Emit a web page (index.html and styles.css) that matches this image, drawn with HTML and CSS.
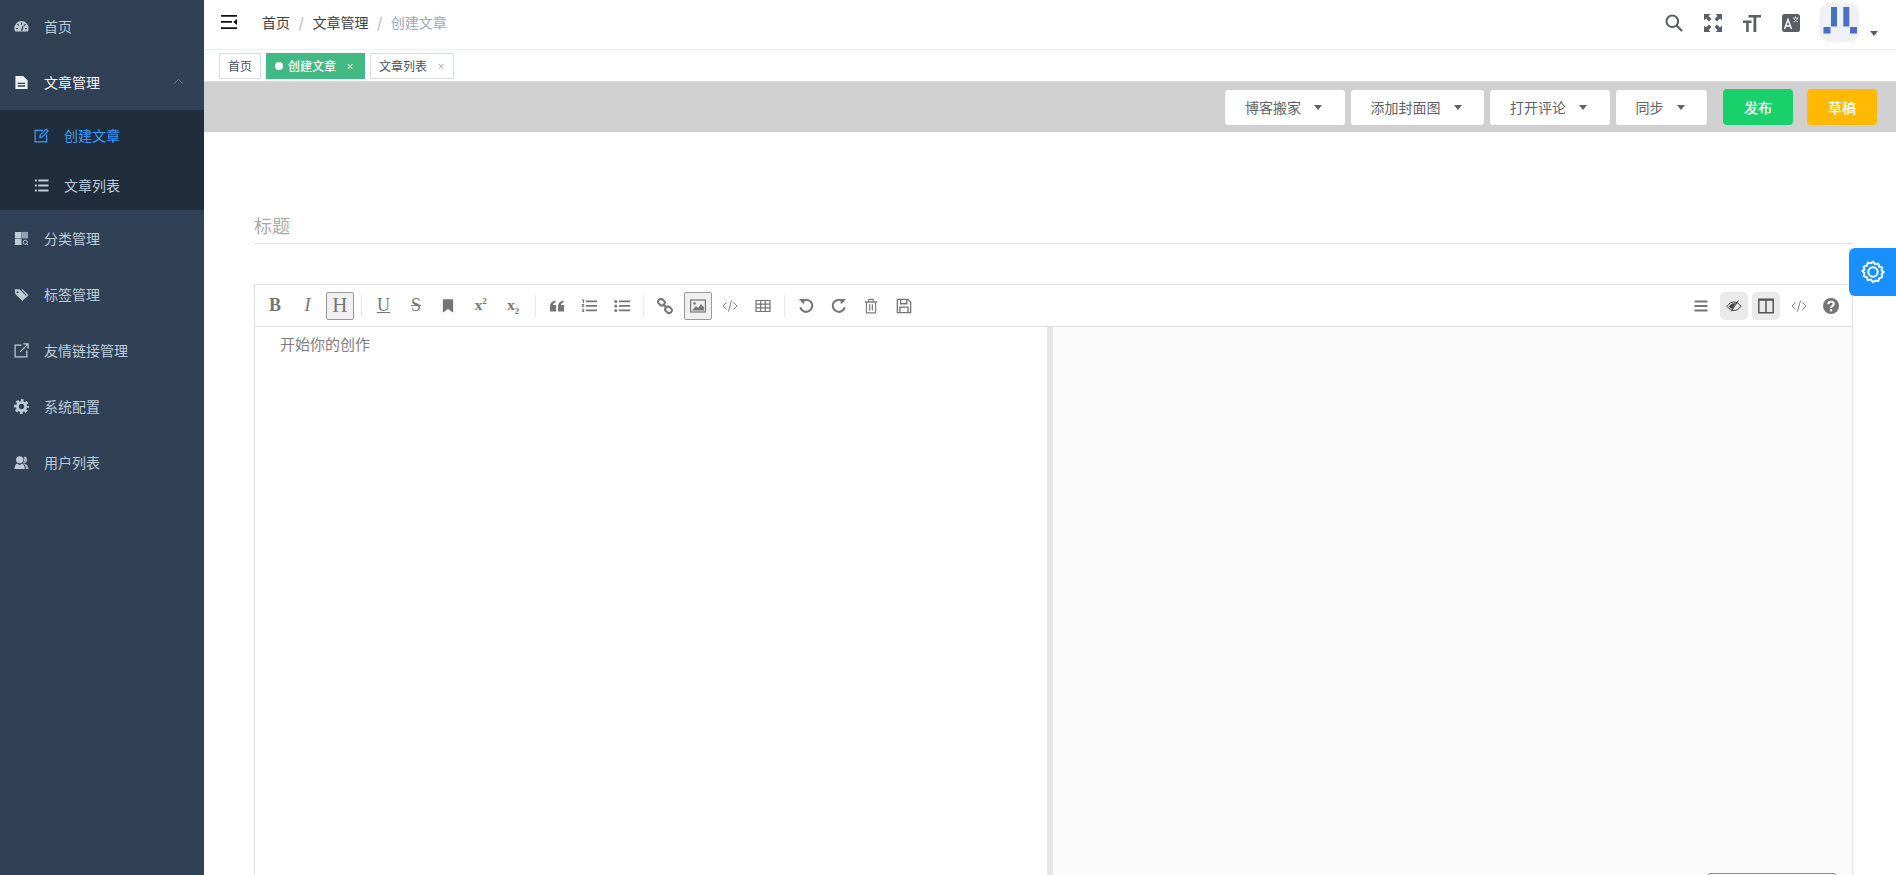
FILE: index.html
```html
<!DOCTYPE html>
<html lang="zh-CN">
<head>
<meta charset="utf-8">
<title>创建文章</title>
<link rel="stylesheet" href="styles.css">
</head>
<body>
<div class="app">
  <aside class="sidebar">
    <div class="nav-item first"><svg class="nav-icon" viewBox="0 0 16 16"><path fill="currentColor" d="M8 2.200A7.600 7.600 0 0 0 .4 9.800c0 1.300.3 2.400.9 3.500h13.400c.6-1.100.9-2.200.9-3.500A7.600 7.600 0 0 0 8 2.200z"/><path fill="#304156" d="M7.300 4h1.400v2H7.300zM3.300 6l1-1 1.300 1.400-1 1zM11.700 5l1 1-1.300 1.400-1-1zM2.300 9.600h2v1.300h-2zM11.700 9.600h2v1.300h-2zM7.200 12.500l2-5.500 1 .3-1 5.200z"/></svg><span>首页</span></div>
    <div class="nav-item open"><svg class="nav-icon" viewBox="0 0 16 16"><path fill="currentColor" d="M1.500 1h8.200l4.800 4.600V15h-13z"/><path fill="#304156" d="M4 8.200h8v1.500H4zM4 11h8v1.500H4z"/></svg><span>文章管理</span><svg class="chev" viewBox="0 0 12 8"><path d="M1 6.500 6 1.500l5 5" fill="none" stroke="currentColor" stroke-width="1"/></svg></div>
    <div class="submenu">
      <div class="sub-item active"><svg class="nav-icon" viewBox="0 0 16 16"><path fill="none" stroke="currentColor" stroke-width="1.300" d="M9.500 2.600H1.200v12.200h12.200V7"/><path fill="none" stroke="currentColor" stroke-width="1.300" d="M6.200 10.200l.5-2.800L13 1.200l2 2-6.200 6.400z"/></svg><span>创建文章</span></div>
      <div class="sub-item"><svg class="nav-icon" viewBox="0 0 16 16"><path fill="currentColor" d="M1 1.500h2v2.200H1zM4.500 1.500h11v2.200h-11zM1 6.900h2v2.200H1zM4.500 6.900h11v2.200h-11zM1 12.300h2v2.200H1zM4.500 12.300h11v2.200h-11z"/></svg><span>文章列表</span></div>
    </div>
    <div class="nav-item"><svg class="nav-icon" viewBox="0 0 16 16"><path fill="currentColor" d="M1 1h7v7H1zM1 8.500h7V15H1z"/><path fill="currentColor" opacity=".7" d="M8.500 1H15v7H8.500z"/><circle cx="12" cy="12" r="2.200" fill="none" stroke="currentColor" stroke-width="1"/><path stroke="currentColor" d="M13.500 13.500 15 15"/></svg><span>分类管理</span></div>
    <div class="nav-item"><svg class="nav-icon" viewBox="0 0 16 16"><path fill="currentColor" fill-rule="evenodd" d="M.8 2.500h5l7.700 7.700-4.600 4.600L1.200 7.200zM3.800 4.400a1.100 1.100 0 1 0 .01 0z"/><path fill="currentColor" d="M7.800 2.500h1.400l6.300 6.300-3 3-.9-.9 1.800-2z"/></svg><span>标签管理</span></div>
    <div class="nav-item"><svg class="nav-icon" viewBox="0 0 16 16"><path fill="none" stroke="currentColor" stroke-width="1.300" d="M8 2.300H1.200v12.500h12.500V8"/><path fill="none" stroke="currentColor" stroke-width="1.300" d="M6.500 9.500 14.500 1.500M10 1h5v5"/></svg><span>友情链接管理</span></div>
    <div class="nav-item"><svg class="nav-icon" viewBox="0 0 16 16"><circle cx="8" cy="8" r="4.400" fill="none" stroke="currentColor" stroke-width="3"/><circle cx="8" cy="8" r="6.800" fill="none" stroke="currentColor" stroke-width="2.400" stroke-dasharray="2.900 2.440" stroke-dashoffset="1.450"/></svg><span>系统配置</span></div>
    <div class="nav-item"><svg class="nav-icon" viewBox="0 0 16 16"><circle cx="6" cy="5" r="3.800" fill="currentColor"/><path fill="currentColor" d="M.5 15c0-3.500 1.500-5.500 3-6l2.500 2 2.500-2c1.500.5 3 2.500 3 6z"/><path fill="currentColor" d="M10.500 1.500a3.500 3.500 0 0 1 0 7l1.500 1c2 .5 3.500 2.500 3.500 5.500h-3c0-2.500-1-4.500-2.500-6z" opacity=".8"/></svg><span>用户列表</span></div>
  </aside>
  <main class="main">
    <header class="topbar">
      <svg class="hamburger" viewBox="0 0 16 14"><path fill="#111" d="M0 0h16v1.800H0zM0 6h11v1.800H0zM0 12.200h16V14H0zM16 4v6l-3.800-3z"/></svg>
      <nav class="crumbs"><span>首页</span><i>/</i><span>文章管理</span><i>/</i><span class="cur">创建文章</span></nav>
      <div class="top-right">
        <svg class="top-icon" viewBox="0 0 18 18"><circle cx="7.300" cy="7.300" r="5.800" fill="none" stroke="#5a5e66" stroke-width="2"/><path d="M11.500 11.500 17 17" stroke="#5a5e66" stroke-width="2.300"/></svg>
        <svg class="top-icon" viewBox="0 0 18 18"><path fill="#5a5e66" d="M0 0h6.500L4.500 2l3 3L5 7.500l-3-3-2 2zM18 0v6.500l-2-2-3 3L10.500 5l3-3-2-2zM0 18v-6.500l2 2 3-3L7.500 13l-3 3 2 2zM18 18h-6.500l2-2-3-3 2.500-2.500 3 3 2-2z"/></svg>
        <svg class="top-icon" viewBox="0 0 18 18"><path fill="#5a5e66" d="M5.500 1H18v2.500h-4.700V18h-2.800V3.500h-5zM0 6.500h8.500V9H5.700v9H3.200V9H0z"/></svg>
        <svg class="top-icon" viewBox="0 0 18 18"><rect width="18" height="18" rx="2.500" fill="#5a5e66"/><path fill="none" stroke="#fff" stroke-width="1.400" d="M2.500 15 6 5.500 9.500 15M3.700 12h4.600"/><path fill="none" stroke="#fff" stroke-width=".9" opacity=".8" d="M11 4h5.500M13.700 2.500V4M15.500 4c-.5 2-2.500 3.500-4 4M12 4.500c.5 1.500 2.500 3 4 3.500"/></svg>
        <div class="avatar-wrap">
          <svg class="avatar" viewBox="0 0 39 39"><rect width="39" height="39" rx="9" fill="#eff1f4"/><path fill="#4a70c4" d="M11 4h6v19.500h-6zM23.300 4h6v19.500h-6zM3.500 24h7v6.500h-7zM30 24h7v6.500h-7z"/></svg>
          <b class="avatar-caret"></b>
        </div>
      </div>
    </header>
    <div class="tags">
      <span class="tag">首页</span>
      <span class="tag on"><em></em>创建文章<u>×</u></span>
      <span class="tag">文章列表<u>×</u></span>
    </div>
    <div class="actions">
      <button class="dd w120">博客搬家<b></b></button>
      <button class="dd w133">添加封面图<b></b></button>
      <button class="dd w120">打开评论<b></b></button>
      <button class="dd w91">同步<b></b></button>
      <button class="solid publish">发布</button>
      <button class="solid draft">草稿</button>
    </div>
    <div class="content">
      <div class="title-input">标题</div>
      <section class="editor">
        <div class="toolbar">
          <span class="tb serif bold">B</span>
          <span class="tb serif ital">I</span>
          <span class="tb serif big pressed">H</span>
          <span class="sep"></span>
          <span class="tb serif under">U</span>
          <span class="tb serif strike">S</span>
          <span class="tb"><svg viewBox="0 0 14 14"><path fill="#757575" d="M2.500 1h9v12L7 9.700 2.500 13z"/></svg></span>
          <span class="tb serif bold sm"><span>x<sup>2</sup></span></span>
          <span class="tb serif bold sm"><span>x<sub>2</sub></span></span>
          <span class="sep"></span>
          <span class="tb"><svg viewBox="0 0 16 14"><path fill="#757575" d="M1 7.500C1 4 3 2 6.500 1.500v2C5 3.800 4 4.800 4 6h3v6.500H1zM9 7.500C9 4 11 2 14.500 1.500v2C13 3.800 12 4.800 12 6h3v6.500H9z"/></svg></span>
          <span class="tb"><svg viewBox="0 0 16 14"><path fill="#757575" d="M5 1.500h11v1.800H5zM5 6h11v1.800H5zM5 10.500h11v1.800H5zM1 .5h2v3.500H2V1.500H1zM.7 5h2.500v1L2 7.300h1.300v.7H.7v-.8L2 6H.7zM.7 9.700h2.500V13H.7v-.7h1.600v-.6h-1V11h1v-.6H.7z"/></svg></span>
          <span class="tb"><svg viewBox="0 0 16 14"><path fill="#757575" d="M5 1.500h11v1.800H5zM5 6h11v1.800H5zM5 10.500h11v1.800H5z"/><circle cx="1.800" cy="2.400" r="1.500" fill="#757575"/><circle cx="1.800" cy="6.900" r="1.500" fill="#757575"/><circle cx="1.800" cy="11.400" r="1.500" fill="#757575"/></svg></span>
          <span class="sep"></span>
          <span class="tb"><svg viewBox="0 0 16 16"><g fill="none" stroke="#757575" stroke-width="2"><rect x="1" y="1.500" width="7" height="5.500" rx="2.700" transform="rotate(40 4.500 4.200)"/><rect x="8" y="9" width="7" height="5.500" rx="2.700" transform="rotate(40 11.500 11.700)"/><path d="M6 6l4 4"/></g></svg></span>
          <span class="tb pressed"><svg viewBox="0 0 16 14"><rect x=".6" y="1" width="14.800" height="12" fill="none" stroke="#757575" stroke-width="1.200"/><path fill="#757575" d="M2 11.500 6 7l2 2 3-4 3 3.500v3z"/><circle cx="4.500" cy="4.500" r="1.300" fill="#757575"/></svg></span>
          <span class="tb"><svg viewBox="0 0 16 14"><path fill="none" stroke="#808080" d="M4.500 3.500 1 7l3.500 3.500M11.500 3.500 15 7l-3.500 3.500M9.500 1.500l-3 11"/></svg></span>
          <span class="tb"><svg viewBox="0 0 16 14"><path fill="none" stroke="#757575" stroke-width="1.200" d="M1 1.500h14v11H1zM1 5.200h14M1 8.900h14M5.700 1.500v11M10.300 1.500v11"/></svg></span>
          <span class="sep"></span>
          <span class="tb"><svg viewBox="0 0 14 14"><path fill="none" stroke="#757575" stroke-width="1.800" d="M3 3.500A5.300 5.300 0 1 1 2 8"/><path fill="#757575" d="M.8 .8h4.700v4.700z"/></svg></span>
          <span class="tb"><svg viewBox="0 0 14 14"><path fill="none" stroke="#757575" stroke-width="1.800" d="M11 3.500A5.300 5.300 0 1 0 12 8"/><path fill="#757575" d="M13.200 .8H8.500v4.700z"/></svg></span>
          <span class="tb"><svg viewBox="0 0 14 14"><path fill="none" stroke="#808080" stroke-width="1.100" d="M3 3.500v9.500h8V3.500M1.500 3.500h11M5 3V1.300h4V3M5.800 5.500v5.500M8.200 5.500v5.500"/></svg></span>
          <span class="tb"><svg viewBox="0 0 14 14"><path fill="none" stroke="#757575" stroke-width="1.200" d="M1.200 1.200h9.300l2.300 2.300v9.300H1.200zM4 1.500v3.500h5.500V1.500M3.500 12.500V8h7v4.500"/></svg></span>
          <span class="spacer"></span>
          <span class="tb"><svg viewBox="0 0 16 16"><path fill="#757575" d="M1.500 2.500h13v2h-13zM1.500 7h13v2h-13zM1.500 11.500h13v2h-13z"/></svg></span>
          <span class="tb soft"><svg viewBox="0 0 16 14"><path fill="none" stroke="#444" stroke-width="1" d="M1 7.300C3 4.500 5.500 3 8 3s5 1.500 7 4.300C13 10 10.500 11.500 8 11.500S3 10 1 7.300z"/><path fill="#444" d="M3 7.200C4.500 5.500 6 4.500 8 4.300L10 4 6.200 10C5 9.500 3.800 8.500 3 7.200z"/><path stroke="#444" d="M12.500 1.500 5 12.500"/></svg></span>
          <span class="tb soft"><svg viewBox="0 0 14 14"><path fill="none" stroke="#555" stroke-width="1.300" d="M.7 1h12.600v12H.7zM7 1v12"/><path stroke="#555" stroke-width="1.500" d="M.7 1.700h12.600"/></svg></span>
          <span class="tb"><svg viewBox="0 0 16 14"><path fill="none" stroke="#808080" d="M4.500 3.500 1 7l3.500 3.500M11.500 3.500 15 7l-3.500 3.500M9.500 1.500l-3 11"/></svg></span>
          <span class="tb"><svg viewBox="0 0 14 14"><circle cx="7" cy="7" r="7" fill="#757575"/><path fill="none" stroke="#fff" stroke-width="1.800" d="M4.600 5.400C4.700 3.900 5.700 3.200 7 3.200s2.400.8 2.400 2c0 1.800-2.400 1.800-2.400 3.600"/><path fill="#fff" d="M6 9.700h2v2H6z"/></svg></span>
        </div>
        <div class="panes">
          <div class="pane-edit">开始你的创作</div>
          <div class="pane-view"><div class="float-box"></div></div>
        </div>
      </section>
    </div>
  </main>
  <button class="gear" aria-label="设置"><svg viewBox="0 0 24 24"><path fill="none" stroke="#fff" stroke-width="2" d="M12 1.800l2.200 2.400 3-.6 1 3 3 1-.6 3 2 1.400-2 2.200.6 3-3 1-1 3-3-.6L12 22.200l-2.200-2.600-3 .6-1-3-3-1 .6-3-2-2.200 2-1.400-.6-3 3-1 1-3 3 .6z"/><circle cx="12" cy="12" r="4.700" fill="none" stroke="#fff" stroke-width="2"/></svg></button>
</div>
</body>
</html>
```

FILE: styles.css
```css
* { box-sizing: border-box; }
html, body { margin: 0; height: 100%; overflow: hidden; background: #fff; }
body { font-family: "Noto Sans CJK SC", "Liberation Sans", sans-serif; font-size: 14px; color: #303133; }
.app { position: relative; display: flex; width: 1896px; height: 875px; overflow: hidden; }

/* sidebar */
.sidebar { flex: 0 0 204px; background: #304156; color: #bfcbd9; }
.nav-item { position: relative; display: flex; align-items: center; height: 56px; padding-left: 14px; }
.nav-item.first { height: 52px; }
.nav-item.open { height: 58px; padding-top: 2px; color: #f4f4f5; }
.nav-icon { flex: none; width: 15px; height: 15px; margin-right: 15px; }
.chev { position: absolute; right: 20px; top: 26px; width: 11px; height: 7px; color: #7f8c9c; }
.submenu { background: #1f2d3d; }
.sub-item { display: flex; align-items: center; height: 50px; padding-left: 34px; }
.sub-item.active { color: #409eff; }

/* main */
.main { flex: 1; min-width: 0; display: flex; flex-direction: column; }
.topbar { display: flex; align-items: center; height: 50px; padding: 0 18px 0 17px; border-bottom: 1px solid #eeeff1; }
.hamburger { width: 16px; height: 14px; margin-right: 25px; margin-top: -5px; }
.crumbs { display: flex; margin-top: -6px; color: #3c3f45; }
.crumbs i { font-style: normal; color: #c0c4cc; margin: 0 8.500px; font-weight: 600; }
.crumbs .cur { color: #97a8be; }
.top-right { margin-left: auto; display: flex; align-items: center; margin-top: -4px; }
.top-icon { width: 18px; height: 18px; margin-left: 21px; }
.avatar-wrap { display: flex; align-items: flex-end; margin-left: 20px; }
.avatar { width: 39px; height: 39px; }
.avatar-caret { width: 0; height: 0; margin: 0 0 6px 11px; border: 4px solid transparent; border-top: 5px solid #5a5e66; border-bottom: 0; }

.tags { display: flex; align-items: center; gap: 5px; height: 31px; padding-left: 15px; }
.tag { display: flex; align-items: center; height: 26px; padding: 0 8px; border: 1px solid #d8dce5; color: #495060; font-size: 12px; }
.tag u { margin-left: 10px; font-size: 8px; text-decoration: none; color: #909399; }
.tag.on { background: #42b983; border-color: #42b983; color: #fff; font-weight: 500; padding-right: 10px; }
.tag.on u { margin-left: 10px; color: #e8f5ef; }
.tag em { width: 8px; height: 8px; margin-right: 5px; border-radius: 50%; background: #fff; }

.actions { display: flex; justify-content: flex-end; align-items: center; height: 51px; padding-right: 19px; background: #d0d0d0; border-top: 1px solid #dcdcdc; }
.dd, .solid { height: 35px; border: 0; border-radius: 3px; font: inherit; font-size: 14px; }
.dd { display: flex; align-items: center; justify-content: center; padding: 0 3px 0 0; background: #fff; color: #606266; margin-right: 6px; }
.dd b { width: 0; height: 0; margin-left: 13px; border: 4.500px solid transparent; border-top: 5px solid #606266; border-bottom: 0; }
.w120 { width: 120px; } .w133 { width: 133px; } .w91 { width: 91px; }
.solid { width: 70px; height: 36px; color: #fff; border-radius: 4px; font-weight: 500; }
.publish { background: #19d16b; margin-left: 10px; }
.draft { background: #ffba00; margin-left: 14px; }

.content { flex: 1; min-height: 0; padding: 0 43px 0 50px; }
.title-input { height: 111px; padding-top: 79px; font-size: 18px; line-height: 28px; color: #aaa; position: relative; }
.title-input::after { content: ""; position: absolute; left: 0; right: 0; top: 111px; border-top: 1px solid #dcdfe6; }
.editor { margin-top: 41px; height: 600px; border: 1px solid #e0e0e0; display: flex; flex-direction: column; }
.toolbar { flex: none; display: flex; align-items: center; gap: 4.400px; height: 42px; padding: 0 7px 0 6px; border-bottom: 1px solid #e0e0e0; }
.tb { flex: none; display: flex; align-items: center; justify-content: center; width: 28px; height: 28px; color: #757575; }
.tb svg { width: 16px; height: 16px; }
.serif { font-family: "Liberation Serif", serif; font-size: 18px; }
.bold { font-weight: 700; }
.ital { font-style: italic; }
.big { font-size: 21px; }
.sm { font-size: 15px; }
.sm sup, .sm sub { font-size: 9px; line-height: 0; }
.under { text-decoration: underline; }
.strike { text-decoration: line-through; }
.pressed { background: #f0f0f0; border: 1px solid #999; border-radius: 2px; }
.soft { background: #eaeaea; border-radius: 5px; }
.sep { flex: none; width: 7px; height: 22px; background: linear-gradient(#e8e8e8, #e8e8e8) center / 1px 100% no-repeat; }
.spacer { flex: 1; }
.panes { flex: 1; display: flex; min-height: 0; }
.pane-edit { flex: 0 0 798px; padding: 5px 25px; line-height: 24px; color: #808080; font-size: 15px; border-right: 6px solid #e5e5e5; }
.pane-view { position: relative; flex: 1; background: #fbfbfb; }
.float-box { position: absolute; left: 655px; top: 546px; width: 128px; height: 20px; background: #fff; border: 1px solid #888; border-radius: 2px 2px 0 0; }

.gear { position: absolute; top: 248px; right: 0; width: 47px; height: 48px; padding: 0; display: flex; align-items: center; justify-content: center; border: 0; border-radius: 6px 0 0 6px; background: #1890ff; }
.gear svg { width: 24px; height: 24px; }
```
